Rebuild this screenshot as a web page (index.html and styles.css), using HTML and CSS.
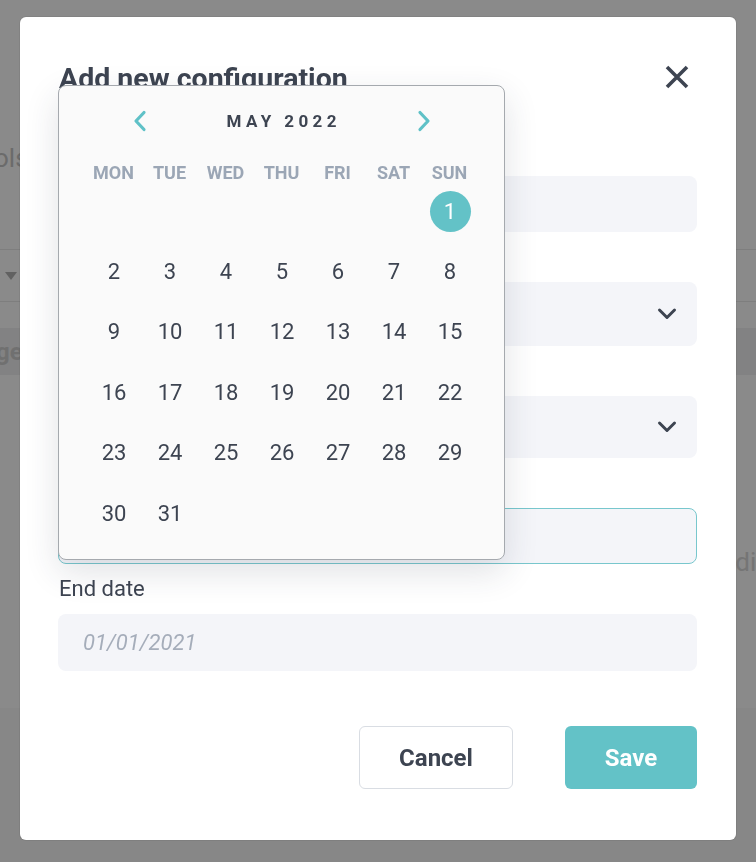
FILE: index.html
```html
<!DOCTYPE html>
<html lang="en">
<head>
<meta charset="utf-8">
<title>Add new configuration</title>
<link rel="stylesheet" href="styles.css">
</head>
<body>
<div class="page">
  <div class="page-head"><span class="page-title">ols</span></div>
  <div class="page-filter"><span class="caret"></span></div>
  <div class="page-band"><span class="band-text">ge</span></div>
  <div class="page-rows"><span class="row-text">die</span></div>
  <div class="page-foot"></div>
</div>

<div class="overlay">
  <div class="modal">
    <div class="modal-head">
      <h1 class="modal-title">Add new configuration</h1>
      <button class="close" aria-label="Close">
        <svg width="24" height="24" viewBox="0 0 24 24"><path d="M2 2 L22 22 M22 2 L2 22" stroke="#3d4451" stroke-width="3.6" fill="none"/></svg>
      </button>
    </div>

    <div class="form">
      <div class="group">
        <label class="label">Name</label>
        <div class="field f1"></div>
      </div>
      <div class="group">
        <label class="label">Type</label>
        <div class="field select f2">
          <span></span>
          <svg class="chev" width="20" height="14" viewBox="0 0 20 14"><path d="M2.5 3 L10 10.5 L17.5 3" stroke="#3d4451" stroke-width="3" fill="none" stroke-linecap="round" stroke-linejoin="round"/></svg>
        </div>
      </div>
      <div class="group">
        <label class="label">Environment</label>
        <div class="field select f3">
          <span></span>
          <svg class="chev" width="20" height="14" viewBox="0 0 20 14"><path d="M2.5 3 L10 10.5 L17.5 3" stroke="#3d4451" stroke-width="3" fill="none" stroke-linecap="round" stroke-linejoin="round"/></svg>
        </div>
      </div>
      <div class="group">
        <label class="label">Start date</label>
        <div class="field focus f4"></div>
      </div>
      <div class="group">
        <label class="label">End date</label>
        <div class="field f5"><span class="placeholder">01/01/2021</span></div>
      </div>
    </div>

    <div class="actions">
      <button class="btn btn-cancel">Cancel</button>
      <button class="btn btn-save">Save</button>
    </div>

    <div class="calendar">
      <div class="cal-head">
        <svg class="nav" width="14" height="22" viewBox="0 0 14 22"><path d="M11 2.5 L3 11 L11 19.5" stroke="#5fc1c7" stroke-width="3.2" fill="none" stroke-linecap="round" stroke-linejoin="round"/></svg>
        <span class="month">MAY 2022</span>
        <svg class="nav" width="14" height="22" viewBox="0 0 14 22"><path d="M3 2.5 L11 11 L3 19.5" stroke="#5fc1c7" stroke-width="3.2" fill="none" stroke-linecap="round" stroke-linejoin="round"/></svg>
      </div>
      <div class="weekdays">
        <span>MON</span><span>TUE</span><span>WED</span><span>THU</span><span>FRI</span><span>SAT</span><span>SUN</span>
      </div>
      <div class="days">
        <span class="day first"><span class="sel">1</span></span>
        <span class="day">2</span><span class="day">3</span><span class="day">4</span><span class="day">5</span><span class="day">6</span><span class="day">7</span><span class="day">8</span>
        <span class="day">9</span><span class="day">10</span><span class="day">11</span><span class="day">12</span><span class="day">13</span><span class="day">14</span><span class="day">15</span>
        <span class="day">16</span><span class="day">17</span><span class="day">18</span><span class="day">19</span><span class="day">20</span><span class="day">21</span><span class="day">22</span>
        <span class="day">23</span><span class="day">24</span><span class="day">25</span><span class="day">26</span><span class="day">27</span><span class="day">28</span><span class="day">29</span>
        <span class="day">30</span><span class="day">31</span>
      </div>
    </div>
  </div>
</div>
</body>
</html>
```

FILE: styles.css
```css
* { box-sizing: border-box; }

html, body {
  margin: 0;
  padding: 0;
  height: 862px;
  overflow: hidden;
}

body {
  font-family: Roboto, "Noto Sans", "Liberation Sans", sans-serif;
  color: #3d4451;
  background: #ffffff;
}

/* background page (dimmed by overlay) */
.page {
  display: flex;
  flex-direction: column;
  height: 862px;
}
.page-head {
  height: 250px;
  padding-top: 143px;
  border-bottom: 1px solid #e9e9e9;
}
.page-title {
  display: block;
  font-size: 26px;
  color: #c6c6c6;
  text-indent: -6px;
  line-height: 30px;
}
.page-filter {
  height: 52px;
  border-bottom: 1px solid #e9e9e9;
  display: flex;
  align-items: center;
  padding-left: 5px;
  margin-bottom: 26px;
}
.caret {
  width: 0;
  height: 0;
  border-left: 6px solid transparent;
  border-right: 6px solid transparent;
  border-top: 8px solid #b4b4b4;
}
.page-band {
  height: 47px;
  background: #f1f1f2;
  display: flex;
  align-items: center;
}
.band-text {
  font-size: 24px;
  font-weight: 700;
  color: #d0d0d0;
  text-indent: -4px;
}
.page-rows {
  height: 333px;
  display: flex;
  justify-content: flex-end;
  padding-top: 172px;
}
.row-text {
  font-size: 26px;
  color: #d8d8d8;
  line-height: 30px;
  margin-right: -14px;
}
.page-foot {
  flex: 1;
  background: #f9f9f9;
}

/* overlay + modal */
.overlay {
  position: fixed;
  inset: 0;
  background: rgba(0, 0, 0, 0.46);
  padding-top: 17px;
}
.modal {
  position: relative;
  width: 716px;
  height: 823px;
  margin: 0 auto;
  background: #ffffff;
  border-radius: 6px;
  box-shadow: 0 0 0 1px rgba(0, 0, 0, 0.06);
  padding: 43px 39px 51px 38px;
}

.modal-head {
  display: flex;
  align-items: center;
  justify-content: space-between;
  height: 34px;
}
.modal-title {
  margin: 0;
  font-size: 28.5px;
  line-height: 34px;
  font-weight: 700;
  color: #3d4451;
  padding-left: 1px;
  padding-top: 3px;
}
.close {
  border: 0;
  background: none;
  padding: 0;
  width: 24px;
  height: 24px;
  margin-right: 8px;
  display: flex;
}

.form {
  margin-top: 44px;
  display: flex;
  flex-direction: column;
  gap: 12px;
}
.group {
  display: flex;
  flex-direction: column;
  gap: 12px;
}
.label {
  font-size: 22px;
  line-height: 26px;
  color: #3d4451;
  padding-left: 1px;
}
.field {
  background: #f4f5f9;
  border-radius: 8px;
  display: flex;
  align-items: center;
  padding: 0 20px 0 25px;
}
.f1 { height: 56px; }
.f2 { height: 64px; }
.f3 { height: 62px; }
.f4 { height: 56px; }
.f5 { height: 57px; }
.select { justify-content: space-between; }
.focus { border: 1px solid #78c7cd; }
.placeholder {
  font-size: 22px;
  font-style: italic;
  color: #a5adba;
}

.actions {
  margin-top: 55px;
  display: flex;
  justify-content: flex-end;
  gap: 52px;
}
.btn {
  height: 63px;
  border-radius: 6px;
  font-family: Roboto, "Noto Sans", sans-serif;
  font-size: 24px;
  font-weight: 700;
  cursor: pointer;
}
.btn-cancel {
  width: 154px;
  background: #ffffff;
  border: 1px solid #d9dde3;
  color: #3d4451;
}
.btn-save {
  width: 132px;
  background: #63c2c7;
  border: 0;
  color: #ffffff;
}

/* date picker popup */
.calendar {
  position: absolute;
  left: 38px;
  top: 68px;
  width: 447px;
  height: 475px;
  background: #fafafa;
  border: 1px solid #a5a9ae;
  border-radius: 8px;
  box-shadow: 0 12px 34px rgba(40, 50, 70, 0.14);
  padding-top: 20px;
  display: flex;
  flex-direction: column;
  align-items: center;
}
.cal-head {
  width: 392px;
  height: 30px;
  padding: 0 47px;
  display: flex;
  align-items: center;
  justify-content: space-between;
}
.nav { display: block; }
.month {
  font-size: 17px;
  font-weight: 700;
  letter-spacing: 4.4px;
  margin-right: -4.4px;
  color: #3d4451;
}
.weekdays {
  margin-top: 27px;
  display: grid;
  grid-template-columns: repeat(7, 56px);
  height: 20px;
}
.weekdays span {
  text-align: center;
  font-size: 18px;
  line-height: 20px;
  font-weight: 700;
  color: #9ba6b5;
}
.days {
  margin-top: -2px;
  display: grid;
  grid-template-columns: repeat(7, 56px);
  grid-auto-rows: 60.4px;
}
.day {
  display: flex;
  align-items: center;
  justify-content: center;
  font-size: 22px;
  color: #3d4451;
  padding-left: 1px;
}
.first { grid-column-start: 7; }
.sel {
  width: 41px;
  height: 41px;
  border-radius: 50%;
  background: #63c2c7;
  color: #ffffff;
  display: flex;
  align-items: center;
  justify-content: center;
}
```
